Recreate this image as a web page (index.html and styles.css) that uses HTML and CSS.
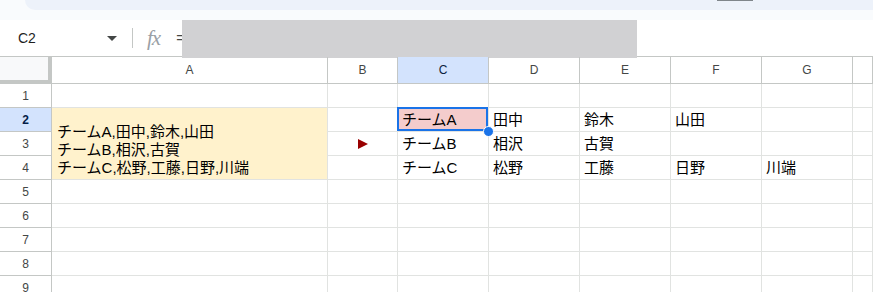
FILE: index.html
```html
<!DOCTYPE html>
<html lang="ja">
<head>
    <meta charset="UTF-8">
    <meta name="viewport" content="width=device-width, initial-scale=1.0">
    <title>Sheet</title>
    <link rel="stylesheet" href="styles.css">
</head>
<body>
    <div class="chrome">
      <div class="pill"><span class="pill-mark"></span></div>
    </div>
    <div class="strip"></div>

    <div class="formula-bar">
      <div class="name-box">C2</div>
      <span class="caret"></span>
      <span class="sep"></span>
      <span class="fx">fx</span>
      <span class="eq">=</span>
      <div class="redact"></div>
    </div>

    <div class="sheet">
      <!-- header -->
      <div class="corner"></div>
      <div class="hd">A</div>
      <div class="hd">B</div>
      <div class="hd hd-on">C</div>
      <div class="hd">D</div>
      <div class="hd">E</div>
      <div class="hd">F</div>
      <div class="hd">G</div>
      <div class="hd"></div>

      <!-- 1 -->
      <div class="rh">1</div>
      <div class="c"></div><div class="c"></div><div class="c"></div><div class="c"></div>
      <div class="c"></div><div class="c"></div><div class="c"></div><div class="c"></div>

      <!-- 2 -->
      <div class="rh rh-on">2</div>
      <div class="c merged">チームA,田中,鈴木,山田<br>チームB,相沢,古賀<br>チームC,松野,工藤,日野,川端</div>
      <div class="c"></div>
      <div class="c sel">チームA</div>
      <div class="c">田中</div>
      <div class="c">鈴木</div>
      <div class="c">山田</div>
      <div class="c"></div>
      <div class="c"></div>

      <!-- 3 -->
      <div class="rh">3</div>
      <div class="c mid"><span class="arrow"></span></div>
      <div class="c">チームB</div>
      <div class="c">相沢</div>
      <div class="c">古賀</div>
      <div class="c"></div>
      <div class="c"></div>
      <div class="c"></div>

      <!-- 4 -->
      <div class="rh">4</div>
      <div class="c"></div>
      <div class="c">チームC</div>
      <div class="c">松野</div>
      <div class="c">工藤</div>
      <div class="c">日野</div>
      <div class="c">川端</div>
      <div class="c"></div>

      <div class="rh">5</div>
      <div class="c"></div><div class="c"></div><div class="c"></div><div class="c"></div>
      <div class="c"></div><div class="c"></div><div class="c"></div><div class="c"></div>

      <div class="rh">6</div>
      <div class="c"></div><div class="c"></div><div class="c"></div><div class="c"></div>
      <div class="c"></div><div class="c"></div><div class="c"></div><div class="c"></div>

      <div class="rh">7</div>
      <div class="c"></div><div class="c"></div><div class="c"></div><div class="c"></div>
      <div class="c"></div><div class="c"></div><div class="c"></div><div class="c"></div>

      <div class="rh">8</div>
      <div class="c"></div><div class="c"></div><div class="c"></div><div class="c"></div>
      <div class="c"></div><div class="c"></div><div class="c"></div><div class="c"></div>

      <div class="rh">9</div>
      <div class="c"></div><div class="c"></div><div class="c"></div><div class="c"></div>
      <div class="c"></div><div class="c"></div><div class="c"></div><div class="c"></div>
    </div>
</body>
</html>
```

FILE: styles.css
```css
body {
  margin: 0;
  height: 292px;
  overflow: hidden;
  background: white;
  font-family: "Liberation Sans", Arial, "Noto Sans CJK JP", sans-serif;
  color: #000;
}

.chrome {
  height: 10px;
  background: #f9fbfd;
}

.pill {
  height: 10px;
  margin-left: 25px;
  background: #edf2fa;
  border-bottom-left-radius: 10px;
  position: relative;
}

.pill-mark {
  position: absolute;
  left: 692px;
  top: 0;
  width: 36px;
  height: 1px;
  background: #80868b;
}

.strip {
  height: 10px;
  background: #f9fbfd;
}

.formula-bar {
  display: flex;
  align-items: center;
  height: 36px;
  border-bottom: 1px solid #c4c7c5;
}

.name-box {
  width: 89px;
  padding-left: 18px;
  font-size: 14px;
  color: #1f1f1f;
}

.caret {
  width: 0;
  height: 0;
  border-left: 5px solid transparent;
  border-right: 5px solid transparent;
  border-top: 5px solid #444746;
}

.sep {
  width: 1px;
  height: 20px;
  margin-left: 15px;
  background: #c4c7c5;
}

.fx {
  margin-left: 14px;
  font-family: "Liberation Serif", serif;
  font-style: italic;
  font-size: 21px;
  color: #9aa0a6;
  letter-spacing: -1px;
}

.eq {
  margin-left: 16px;
  font-size: 14px;
  color: #444746;
}

.redact {
  align-self: flex-start;
  width: 455px;
  height: 38px;
  margin-left: -2px;
  margin-bottom: -2px;
  background: #d1d1d3;
}

.sheet {
  display: grid;
  grid-template-columns: 52px 276px 70px 91px 91px 91px 91px 91px 1fr;
  grid-template-rows: 27px;
  grid-auto-rows: 24px;
}

.corner {
  background: #f8f9fa;
  border-right: 4px solid #c4c7c5;
  border-bottom: 4px solid #c4c7c5;
}

.hd {
  display: flex;
  justify-content: center;
  align-items: center;
  font-size: 12px;
  color: #444746;
  border-right: 1px solid #c4c7c5;
  border-bottom: 1px solid #c4c7c5;
}

.hd-on {
  background: #d3e3fd;
  color: #0b1f3f;
}

.rh {
  display: flex;
  justify-content: center;
  align-items: center;
  font-size: 12px;
  color: #444746;
  border-right: 1px solid #c4c7c5;
  border-bottom: 1px solid #c4c7c5;
}

.rh-on {
  background: #d3e3fd;
  color: #041e49;
  font-weight: bold;
}

.c {
  display: flex;
  align-items: flex-end;
  padding: 0 4px 2px;
  font-size: 15px;
  line-height: 18px;
  white-space: nowrap;
  border-right: 1px solid #e1e3e1;
  border-bottom: 1px solid #e1e3e1;
}

.merged {
  grid-row: span 3;
  padding: 0 5px 2px;
  background: #fff2cc;
}

.mid {
  justify-content: center;
  align-items: center;
  padding: 0;
}

.arrow {
  width: 0;
  height: 0;
  border-left: 10px solid #990000;
  border-top: 5px solid transparent;
  border-bottom: 5px solid transparent;
}

.sel {
  position: relative;
  background: #f4cccc;
}

.sel::after {
  content: "";
  position: absolute;
  top: -1px;
  left: -1px;
  right: 0;
  bottom: 0;
  border: 2px solid #1a73e8;
}

.sel::before {
  content: "";
  position: absolute;
  right: -6px;
  bottom: -6px;
  width: 9px;
  height: 9px;
  border-radius: 50%;
  background: #1a73e8;
  border: 1px solid white;
  z-index: 2;
}
```
